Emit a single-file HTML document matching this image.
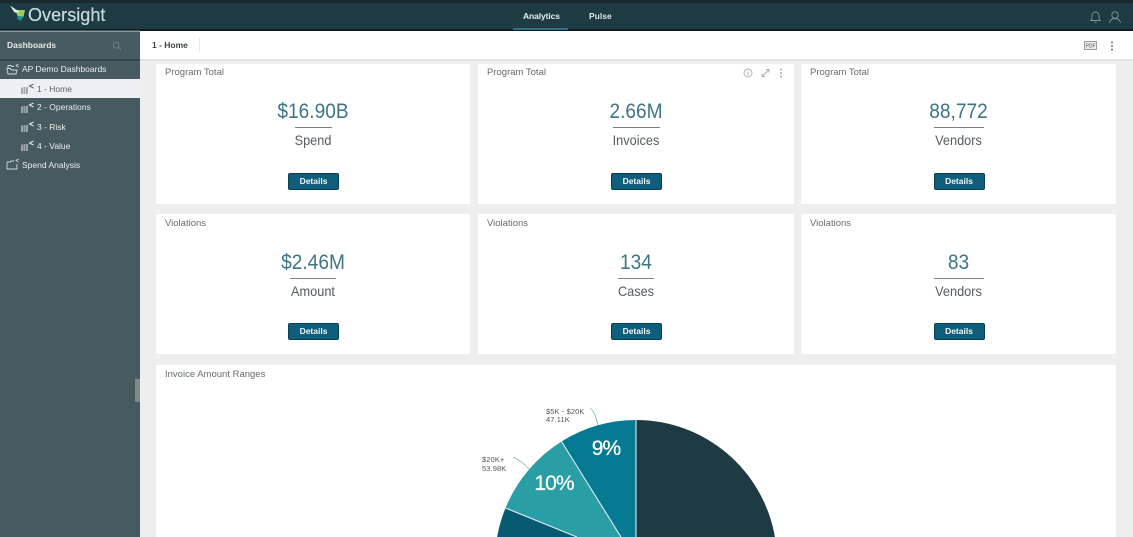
<!DOCTYPE html>
<html>
<head>
<meta charset="utf-8">
<style>
html,body{margin:0;padding:0;overflow:hidden;width:1133px;height:537px;}
body{position:relative;background:#eeeeee;font-family:"Liberation Sans",sans-serif;color:#555;}
.a{position:absolute;white-space:nowrap;}
.card{position:absolute;background:#fff;overflow:hidden;}
.title{position:absolute;left:9px;top:2px;font-size:9.5px;line-height:13px;color:#666c70;letter-spacing:0;white-space:nowrap;}
.num{position:absolute;left:0;right:0;top:35px;text-align:center;font-size:21px;line-height:28px;color:#3d7585;white-space:nowrap;transform:scaleX(.91);}
.rule{position:absolute;left:50%;top:63px;height:1px;background:#808080;}
.lab{position:absolute;left:0;right:0;top:67.5px;text-align:center;font-size:14px;line-height:18px;color:#565c5f;transform:scaleX(.91);}
.btn{position:absolute;left:50%;top:109px;width:49px;height:15px;margin-left:-25px;background:#0f5f7c;border:.5px solid #0a3f52;border-radius:2px;color:#f2f6f7;font-size:8.5px;font-weight:bold;line-height:15px;text-align:center;}
.nav{position:absolute;left:0;width:140px;height:19px;color:#e8eeee;font-size:8.5px;line-height:19px;white-space:nowrap;}
</style>
</head>
<body>
<!-- header -->
<div class="a" style="left:0;top:0;width:1133px;height:3px;background:#1a2a30"></div>
<div class="a" style="left:0;top:3px;width:1133px;height:26px;background:#1e3a43"></div>
<div class="a" style="left:0;top:29px;width:1133px;height:1.5px;background:#0f1b1f"></div>
<svg class="a" style="left:8px;top:4px" width="20" height="20" viewBox="0 0 20 20">
<path d="M7 6L17 6L15.5 13L10 13Z" fill="#9ccb62"/>
<path d="M10 12L15.5 12.5L13 17L9 15Z" fill="#1c8f96"/>
<path d="M2 1.5L11.5 8L6.5 8.5Z" fill="#e6f4ea"/>
</svg>
<div class="a" style="left:28px;top:4px;font-size:18px;line-height:23px;color:#c6dcdc;letter-spacing:.05px;-webkit-text-stroke:.2px #c6dcdc">Oversight</div>
<div class="a" style="left:523px;top:10px;font-size:8.5px;line-height:13px;color:#e6eeee;font-weight:bold;letter-spacing:-.1px">Analytics</div>
<div class="a" style="left:589px;top:10px;font-size:8.5px;line-height:13px;color:#dfe8e8;font-weight:bold">Pulse</div>
<div class="a" style="left:513px;top:28px;width:55px;height:1.5px;background:#2d6f8c"></div>
<svg class="a" style="left:1089px;top:10px" width="13" height="14" viewBox="0 0 13 14" fill="none" stroke="#7d989b" stroke-width=".9">
<path d="M2 10.5C3 9.5 3 8 3 6C3 3.5 4.5 2 6.5 2S10 3.5 10 6C10 8 10 9.5 11 10.5Z"/><path d="M5.5 12.2H7.5"/>
</svg>
<svg class="a" style="left:1108px;top:10px" width="14" height="14" viewBox="0 0 14 14" fill="none" stroke="#7d989b" stroke-width=".9">
<circle cx="7" cy="5" r="3.2"/><path d="M1.5 13C2 10 4 8.5 7 8.5S12 10 12.5 13"/>
</svg>

<!-- sidebar -->
<div class="a" style="left:0;top:30px;width:140px;height:507px;background:#475a60"></div>
<div class="a" style="left:0;top:30.5px;width:140px;height:1.5px;background:#8a9a9c"></div>
<div class="a" style="left:0;top:59px;width:140px;height:1.5px;background:#34454a"></div>
<div class="a" style="left:7px;top:39px;font-size:8.5px;line-height:13px;font-weight:bold;color:#e2e8e8">Dashboards</div>
<svg class="a" style="left:112px;top:41px" width="10" height="10" viewBox="0 0 10 10" fill="none" stroke="#6f8286" stroke-width=".9">
<circle cx="4.2" cy="4.2" r="3"/><path d="M6.5 6.5L9 9"/>
</svg>
<div class="nav" style="top:60px;padding-left:22px;box-sizing:border-box">AP Demo Dashboards</div>
<div class="a" style="left:0;top:79px;width:140px;height:19px;background:#eeeef5"></div>
<div class="nav" style="top:79.5px;padding-left:37px;box-sizing:border-box;color:#5a6266">1 - Home</div>
<div class="nav" style="top:98px;padding-left:37px;box-sizing:border-box">2 - Operations</div>
<div class="nav" style="top:117.5px;padding-left:37px;box-sizing:border-box">3 - Risk</div>
<div class="nav" style="top:136.5px;padding-left:37px;box-sizing:border-box">4 - Value</div>
<div class="nav" style="top:155.5px;padding-left:22px;box-sizing:border-box">Spend Analysis</div>
<svg class="a" style="left:6px;top:63px" width="14" height="12" viewBox="0 0 14 12" fill="none" stroke="#cfd9da" stroke-width=".9">
<path d="M2 5V2.5H5L6 3.5H8"/><path d="M1 5.5H4.5L5.5 7H11L10 11H2Z"/><path d="M12.5 1L10 2.5L12.5 4"/>
</svg>
<svg class="a" style="left:6px;top:158px" width="14" height="12" viewBox="0 0 14 12" fill="none" stroke="#cfd9da" stroke-width=".9">
<path d="M1 4V11H11V6"/><path d="M1 4H4L5 3H8"/><path d="M12.5 1L10 2.5L12.5 4"/>
</svg>
<svg class="a" style="left:21px;top:83px" width="14" height="12" viewBox="0 0 14 12"><g fill="#a8adb3"><rect x="0" y="4.5" width="2" height="6.5"/><rect x="2.5" y="4" width="2" height="7"/><rect x="5" y="4" width="2" height="7"/></g><path d="M12.5 1L8.5 3L12.5 5" fill="none" stroke="#5d686c" stroke-width="1.1"/></svg>
<svg class="a" style="left:21px;top:102px" width="14" height="12" viewBox="0 0 14 12"><g fill="#98a4a7"><rect x="0" y="4.5" width="2" height="6.5"/><rect x="2.5" y="4" width="2" height="7"/><rect x="5" y="4" width="2" height="7"/></g><path d="M12.5 1L8.5 3L12.5 5" fill="none" stroke="#e2e8e8" stroke-width="1.1"/></svg>
<svg class="a" style="left:21px;top:121px" width="14" height="12" viewBox="0 0 14 12"><g fill="#98a4a7"><rect x="0" y="4.5" width="2" height="6.5"/><rect x="2.5" y="4" width="2" height="7"/><rect x="5" y="4" width="2" height="7"/></g><path d="M12.5 1L8.5 3L12.5 5" fill="none" stroke="#e2e8e8" stroke-width="1.1"/></svg>
<svg class="a" style="left:21px;top:140px" width="14" height="12" viewBox="0 0 14 12"><g fill="#98a4a7"><rect x="0" y="4.5" width="2" height="6.5"/><rect x="2.5" y="4" width="2" height="7"/><rect x="5" y="4" width="2" height="7"/></g><path d="M12.5 1L8.5 3L12.5 5" fill="none" stroke="#e2e8e8" stroke-width="1.1"/></svg>
<div class="a" style="left:135px;top:379px;width:5px;height:23px;background:#7d8a8d"></div>

<!-- toolbar -->
<div class="a" style="left:140px;top:30.5px;width:993px;height:29px;background:#fff"></div>
<div class="a" style="left:140px;top:59px;width:993px;height:1.5px;background:#e4e4e4"></div>
<div class="a" style="left:152px;top:39px;font-size:8.5px;line-height:13px;font-weight:bold;color:#3c4346">1 - Home</div>
<div class="a" style="left:199px;top:38px;width:1px;height:14px;background:#e6e6e6"></div>
<svg class="a" style="left:1084px;top:41px" width="13" height="9" viewBox="0 0 13 9"><rect x=".5" y=".5" width="12" height="8" fill="#ececec" stroke="#888" stroke-width=".8"/><text x="6.5" y="6.4" text-anchor="middle" font-size="5" font-family="Liberation Sans" fill="#555">PDF</text></svg>
<svg class="a" style="left:1110px;top:41px" width="4" height="11" viewBox="0 0 4 11" fill="#3e4548"><circle cx="2" cy="1.5" r=".9"/><circle cx="2" cy="5" r=".9"/><circle cx="2" cy="8.5" r=".9"/></svg>

<!-- row 1 -->
<div class="card" style="left:156px;top:64px;width:314px;height:140px">
<div class="title">Program Total</div><div class="num" style="top:34px">$16.90B</div><div class="rule" style="width:37px;margin-left:-18.5px"></div><div class="lab" style="top:67px">Spend</div><div class="btn">Details</div>
</div>
<div class="card" style="left:478px;top:64px;width:316px;height:140px">
<div class="title">Program Total</div><div class="num" style="top:34px">2.66M</div><div class="rule" style="width:47px;margin-left:-23.5px"></div><div class="lab" style="top:67px">Invoices</div><div class="btn">Details</div>
<svg class="a" style="left:264px;top:3px" width="44" height="12" viewBox="0 0 44 12" fill="none" stroke="#aab0b2" stroke-width=".9">
<circle cx="6" cy="6" r="4"/><path d="M6 5V8.5M6 3.5V4.3"/>
<path d="M20 9.5L27 2.5M24 2.5H27V5.5M20 6.5V9.5H23"/>
<circle cx="39" cy="2.5" r=".6" fill="#999"/><circle cx="39" cy="6" r=".6" fill="#999"/><circle cx="39" cy="9.5" r=".6" fill="#999"/>
</svg>
</div>
<div class="card" style="left:801px;top:64px;width:315px;height:140px">
<div class="title">Program Total</div><div class="num" style="top:34px">88,772</div><div class="rule" style="width:50px;margin-left:-25px"></div><div class="lab" style="top:67px">Vendors</div><div class="btn">Details</div>
</div>

<!-- row 2 -->
<div class="card" style="left:156px;top:214px;width:314px;height:140px">
<div class="title" style="top:3px">Violations</div><div class="num">$2.46M</div><div class="rule" style="top:64px;width:46px;margin-left:-23px"></div><div class="lab">Amount</div><div class="btn">Details</div>
</div>
<div class="card" style="left:478px;top:214px;width:316px;height:140px">
<div class="title" style="top:3px">Violations</div><div class="num">134</div><div class="rule" style="top:64px;width:36px;margin-left:-18px"></div><div class="lab">Cases</div><div class="btn">Details</div>
</div>
<div class="card" style="left:801px;top:214px;width:315px;height:140px">
<div class="title" style="top:3px">Violations</div><div class="num">83</div><div class="rule" style="top:64px;width:50px;margin-left:-25px"></div><div class="lab">Vendors</div><div class="btn">Details</div>
</div>

<!-- chart -->
<div class="card" style="left:156px;top:365px;width:960px;height:172px">
<div class="title" style="top:2.5px">Invoice Amount Ranges</div>
</div>
<svg class="a" style="left:0;top:0" width="1133" height="537" viewBox="0 0 1133 537">
<path d="M636 420A141 141 0 0 1 774.9 537L636 537Z" fill="#1e3a43"/>
<path d="M505.5 508A141 141 0 0 0 497.1 537L576.9 537Z" fill="#085a72"/>
<path d="M561.5 441.5A141 141 0 0 0 505.5 508L576.9 537L621 537Z" fill="#2a9ea5"/>
<path d="M636 420A141 141 0 0 0 561.5 441.5L621 537L636 537Z" fill="#067a92"/>
<path d="M636 420L636 537M561.5 441.5L621 537M505.5 508L576.9 537" fill="none" stroke="#d8eef2" stroke-width="1.1"/>
<path d="M590 408C595 412 596 418 598 425" fill="none" stroke="#7fb0b5" stroke-width=".8"/>
<path d="M513 457C520 460 525 465 529 469" fill="none" stroke="#7fb0b5" stroke-width=".8"/>
<text x="606" y="455" text-anchor="middle" font-family="Liberation Sans" font-size="21" fill="#fff" stroke="#fff" stroke-width=".25" letter-spacing="-.9">9%</text>
<text x="554" y="490" text-anchor="middle" font-family="Liberation Sans" font-size="21" fill="#fff" stroke="#fff" stroke-width=".2" letter-spacing="-.9">10%</text>
<text x="546" y="414" font-family="Liberation Sans" font-size="7.5" fill="#555" letter-spacing=".1">$5K - $20K</text>
<text x="546" y="422" font-family="Liberation Sans" font-size="7.5" fill="#555" letter-spacing=".1">47.11K</text>
<text x="482" y="462" font-family="Liberation Sans" font-size="7.5" fill="#555" letter-spacing=".1">$20K+</text>
<text x="482" y="471" font-family="Liberation Sans" font-size="7.5" fill="#555" letter-spacing=".1">53.98K</text>
</svg>
</body>
</html>
